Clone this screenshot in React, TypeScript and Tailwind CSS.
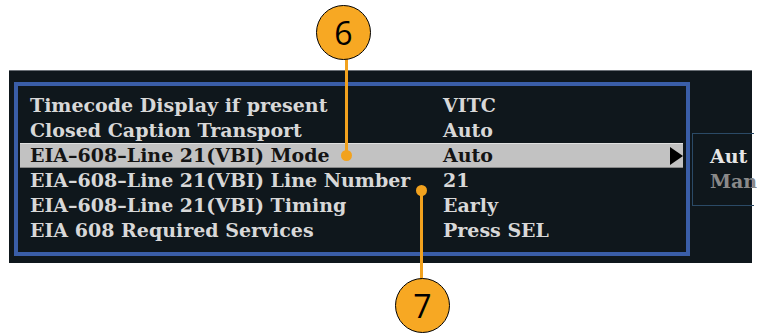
import React from "react";

const rows: { label: string; value: string; selected?: boolean }[] = [
  { label: "Timecode Display if present", value: "VITC" },
  { label: "Closed Caption Transport", value: "Auto" },
  { label: "EIA–608–Line 21(VBI) Mode", value: "Auto", selected: true },
  { label: "EIA–608–Line 21(VBI) Line Number", value: "21" },
  { label: "EIA–608–Line 21(VBI) Timing", value: "Early" },
  { label: "EIA 608 Required Services", value: "Press SEL" },
];

const serif = { fontFamily: '"DejaVu Serif", "Liberation Serif", serif' };

function Callout({ n, left, top }: { n: string; left: number; top: number }) {
  return (
    <div
      className="absolute w-[55px] h-[55px] rounded-full bg-[#f7a823] border-[1.5px] border-black flex items-center justify-center text-[32px] leading-none text-black"
      style={{ left, top, fontFamily: '"Open Sans", "Liberation Sans", sans-serif' }}
    >
      {n}
    </div>
  );
}

export default function App() {
  return (
    <div className="relative w-[757px] h-[335px] bg-white overflow-hidden">
      <div className="pt-[70px] pl-[9px]">
        <div className="w-[743px] h-[193px] bg-[#0f171c] border-t border-[#6a7076] pt-[11px] pl-[5px] flex items-start">
          <div className="w-[676px] h-[174px] border-4 border-[#3a5ea8] pt-[7px] pl-[2px] pr-[3px] flex flex-col shrink-0">
            {rows.map((r) => (
              <div
                key={r.label}
                className={
                  "relative h-[25px] flex items-center text-[19px] font-bold shrink-0 " +
                  (r.selected
                    ? "bg-[#c2c2c2] text-[#141414] border-t border-[#e0e0e0] border-b border-b-[#888]"
                    : "text-[#d8d8d8]")
                }
                style={serif}
              >
                <span className="pl-[10px] w-[423px] whitespace-nowrap">{r.label}</span>
                <span className="whitespace-nowrap">{r.value}</span>
                {r.selected && (
                  <svg className="absolute right-0 top-[3px]" width="13" height="18" viewBox="0 0 13 18">
                    <polygon points="0,0 13,9 0,18" fill="#000" />
                  </svg>
                )}
              </div>
            ))}
          </div>
          <div className="ml-[2px] mt-[51px] w-[62px] h-[73px] border border-r-0 border-[#2b4a66] pl-[17px] pt-[10px] flex flex-col text-[19px] font-bold whitespace-nowrap" style={serif}>
            <span className="h-[25px] leading-[25px] text-[#e6e6e6]">Aut</span>
            <span className="h-[25px] leading-[25px] text-[#8a8a8a]">Man</span>
          </div>
        </div>
      </div>

      {/* Callout 6 */}
      <div className="absolute left-[345px] top-[58px] w-[3px] h-[97px] bg-[#f2a21e]" />
      <div className="absolute left-[341px] top-[150px] w-[11px] h-[11px] rounded-full bg-[#f2a21e]" />
      <Callout n="6" left={316} top={5} />

      {/* Callout 7 */}
      <div className="absolute left-[420px] top-[190px] w-[3px] h-[90px] bg-[#f2a21e]" />
      <div className="absolute left-[416px] top-[185px] w-[11px] h-[11px] rounded-full bg-[#f2a21e]" />
      <Callout n="7" left={395} top={278} />
    </div>
  );
}
